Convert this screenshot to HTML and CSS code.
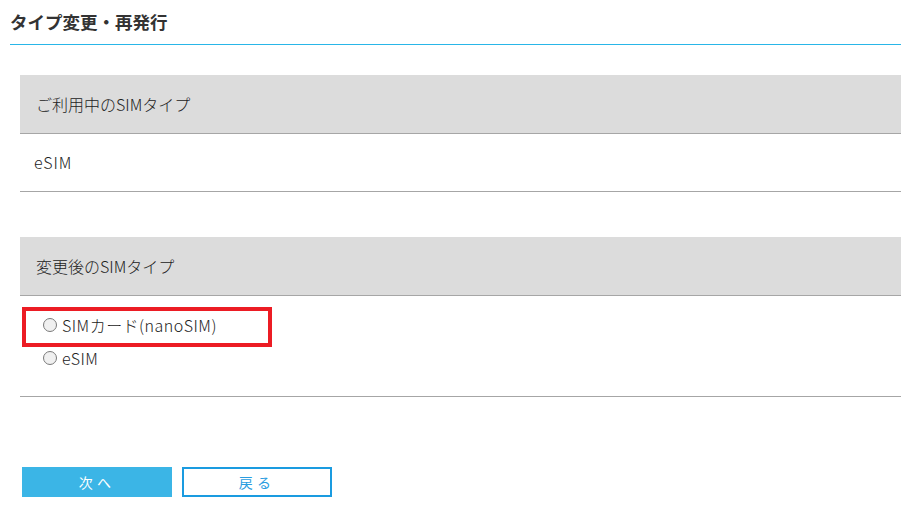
FILE: index.html
```html
<!DOCTYPE html>
<html lang="ja">
<head>
    <meta charset="UTF-8">
    <meta name="viewport" content="width=device-width, initial-scale=1.0">
    <title>タイプ変更・再発行</title>
    <link rel="stylesheet" href="styles.css">
</head>
<body>
    <div class="page">
        <h1>タイプ変更・再発行</h1>

        <div class="section">
            <div class="section-head">ご利用中のSIMタイプ</div>
            <div class="section-body current">eSIM</div>
        </div>

        <div class="section second">
            <div class="section-head">変更後のSIMタイプ</div>
            <div class="section-body options">
                <label class="option">
                    <input type="radio" name="simType" value="nano">SIMカード(nanoSIM)
                </label>
                <label class="option">
                    <input type="radio" name="simType" value="esim">eSIM
                </label>
                <div class="highlight"></div>
            </div>
        </div>

        <div class="buttons">
            <button type="button" class="btn btn-next">次へ</button>
            <button type="button" class="btn btn-back">戻る</button>
        </div>
    </div>
</body>
</html>
```

FILE: styles.css
```css
body {
    margin: 0;
    font-family: "Noto Sans CJK JP", "Noto Sans", sans-serif;
    color: #222;
    background-color: #fff;
}
.page {
    padding-left: 10px;
}
h1 {
    margin: 0;
    padding: 10px 0;
    font-size: 17.5px;
    line-height: 24px;
    font-weight: bold;
    color: #333;
    border-bottom: 1px solid #29b6e8;
}
.section {
    margin: 30px 0 0 10px;
}
.section.second {
    margin-top: 45px;
}
.section-head {
    height: 58px;
    line-height: 58px;
    padding-left: 16px;
    font-size: 16px;
    font-weight: 300;
    background-color: #dcdcdc;
    border-bottom: 1px solid #a6a6a6;
}
.section-body {
    border-bottom: 1px solid #a6a6a6;
    font-size: 16px;
    font-weight: 300;
}
.current {
    height: 57px;
    line-height: 57px;
    padding-left: 14px;
    letter-spacing: 0.06em;
}
.options {
    position: relative;
    padding: 12px 0 22px 23px;
}
.option {
    display: flex;
    align-items: center;
    height: 33px;
    letter-spacing: 0.03em;
}
.option input {
    appearance: none;
    width: 14px;
    height: 14px;
    margin: 0 5px 0 0;
    border: 1px solid #7a7a7a;
    border-radius: 50%;
    background-color: #f0f0f0;
}
.highlight {
    position: absolute;
    left: 2px;
    top: 11px;
    width: 242px;
    height: 32px;
    border: 4px solid #ec1c24;
}
.buttons {
    display: flex;
    gap: 10px;
    margin: 70px 0 0 12px;
}
.btn {
    width: 150px;
    height: 30px;
    font-family: inherit;
    font-size: 14px;
    letter-spacing: 0.3em;
    cursor: pointer;
}
.btn-next {
    background-color: #3bb5e6;
    color: #fff;
    border: none;
}
.btn-back {
    background-color: #fff;
    color: #2a9de0;
    border: 2px solid #1a9be0;
}
```
